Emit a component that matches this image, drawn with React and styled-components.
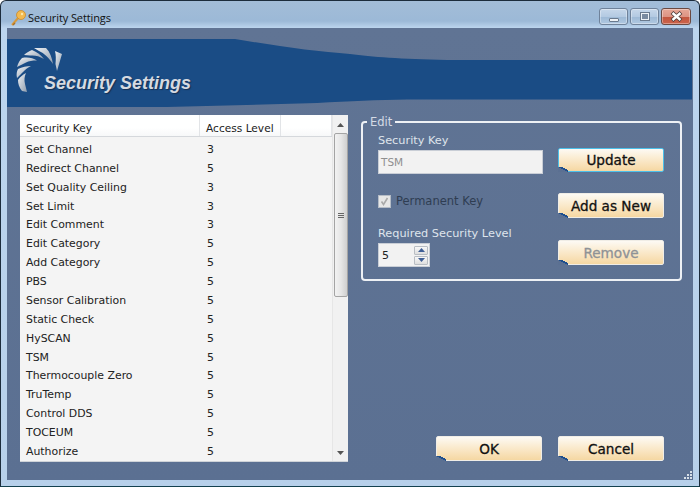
import styled, { createGlobalStyle } from "styled-components";

const GlobalStyle = createGlobalStyle`
  html, body {
    margin: 0;
    padding: 0;
    background: #fff;
  }
`;

const UI_FONT = `"DejaVu Sans", Verdana, sans-serif`;

const SECURITY_KEYS = [
  ["Set Channel", 3],
  ["Redirect Channel", 5],
  ["Set Quality Ceiling", 3],
  ["Set Limit", 3],
  ["Edit Comment", 3],
  ["Edit Category", 5],
  ["Add Category", 5],
  ["PBS", 5],
  ["Sensor Calibration", 5],
  ["Static Check", 5],
  ["HySCAN", 5],
  ["TSM", 5],
  ["Thermocouple Zero", 5],
  ["TruTemp", 5],
  ["Control DDS", 5],
  ["TOCEUM", 5],
  ["Authorize", 5],
];

const Window = styled.div`
  box-sizing: border-box;
  width: 700px;
  height: 487px;
  display: flex;
  flex-direction: column;
  border: 1px solid #1c2c3c;
  border-bottom-color: #14414f;
  border-radius: 6px 6px 0 0;
  background: linear-gradient(180deg, #a3bdd8 0, #9cb9d7 20px, #bcd5ee 27px, #b7d0ea 100%);
  overflow: hidden;
`;

const TitleBar = styled.div`
  height: 27px;
  flex: none;
  display: flex;
  align-items: center;
  padding: 6px 8px 0 10px;
  box-sizing: border-box;
`;

const TitleText = styled.span`
  margin-left: 1px;
  font: 11px "Open Sans", sans-serif;
  letter-spacing: -0.1px;
  color: #111;
`;

const CaptionGroup = styled.div`
  margin-left: auto;
  display: flex;
  gap: 2px;
  margin-top: -2px;
`;

const CaptionButton = styled.div`
  box-sizing: border-box;
  width: ${(p) => p.$w}px;
  height: 17px;
  display: flex;
  align-items: center;
  justify-content: center;
  border: 1px solid ${(p) => (p.$close ? "#6b4a42" : "#6f829a")};
  border-radius: 3px;
  background: ${(p) =>
    p.$close
      ? "linear-gradient(180deg, #e6a797 0, #dd9484 50%, #c2553e 51%, #cb644c 100%)"
      : "linear-gradient(180deg, #c6d7ea 0, #b4cae2 50%, #9db9d6 51%, #b0c8e1 100%)"};
  box-shadow: inset 0 0 0 1px rgba(255, 255, 255, 0.35);
`;

const MinGlyph = styled.div`
  width: 10px;
  height: 4px;
  margin-top: 6px;
  background: #eef2f6;
  border: 1px solid #6a7a8e;
  border-radius: 1px;
  box-sizing: border-box;
`;

const MaxGlyph = styled.div`
  width: 10px;
  height: 9px;
  background: #7a8ba0;
  border: 2px solid #eef2f6;
  outline: 1px solid #6a7a8e;
  outline-offset: -1px;
  box-sizing: border-box;
`;

const Client = styled.div`
  position: relative;
  margin: 0 6px 6px;
  flex: 1;
  display: flex;
  flex-direction: column;
  background: linear-gradient(180deg, #607494 0, #5b7092 100%);
  min-height: 0;
`;

const Header = styled.div`
  position: relative;
  height: 87px;
  flex: none;
`;

const HeaderArt = styled.svg`
  position: absolute;
  left: 0;
  top: 0;
`;

const HeaderTitle = styled.h1`
  position: absolute;
  left: 37px;
  top: 45px;
  margin: 0;
  font: italic bold 18px "Liberation Sans", Arial, sans-serif;
  color: #d5dae1;
  text-shadow: 1px 1px 1px rgba(20, 40, 70, 0.8);
`;

const Body = styled.div`
  flex: 1;
  display: flex;
  gap: 13px;
  padding: 0 12px 19px 13px;
  min-height: 0;
`;

const ListPanel = styled.div`
  width: 328px;
  height: 347px;
  flex: none;
  display: flex;
  background: #f4f4f4;
  border-bottom: 1px solid #cfd3d8;
  box-sizing: border-box;
`;

const Table = styled.div`
  flex: 1;
  display: flex;
  flex-direction: column;
  min-width: 0;
  font: 10.9px ${UI_FONT};
  color: #222;
`;

const HeaderRow = styled.div`
  display: grid;
  grid-template-columns: 180px 81px 1fr;
  height: 22px;
  background: linear-gradient(180deg, #fff 0, #fff 60%, #f7f8f9 100%);
  border-bottom: 1px solid #d5d8dc;
  box-sizing: border-box;
  margin-bottom: 3px;
  font-size: 10.6px;
`;

const HeaderCell = styled.div`
  display: flex;
  align-items: center;
  padding-left: ${(p) => p.$pad}px;
  border-right: 1px solid #e2e4e7;
  padding-top: 5px;
`;

const Row = styled.div`
  display: grid;
  grid-template-columns: 180px 1fr;
  height: 18.875px;
  align-items: center;
`;

const KeyCell = styled.span`
  padding-left: 6px;
`;

const LevelCell = styled.span`
  padding-left: 7px;
`;

const ScrollTrack = styled.div`
  width: 16px;
  flex: none;
  display: flex;
  flex-direction: column;
  align-items: center;
  background: #f1f1f1;
  border-left: 1px solid #e6e6e6;
  box-sizing: border-box;
`;

const ScrollArrow = styled.svg`
  flex: none;
  margin: ${(p) => (p.$down ? "auto 0 6px" : "8px 0 6px")};
`;

const ScrollThumb = styled.div`
  box-sizing: border-box;
  width: 14px;
  height: 164px;
  display: flex;
  flex-direction: column;
  align-items: center;
  justify-content: center;
  gap: 1px;
  border: 1px solid #a4a4a4;
  border-radius: 2px;
  background: linear-gradient(90deg, #f2f2f2 0, #e6e6e6 50%, #cfcfcf 100%);
`;

const GripLine = styled.div`
  width: 6px;
  height: 1px;
  background: #666;
`;

const RightColumn = styled.div`
  flex: 1;
  display: flex;
  flex-direction: column;
  justify-content: space-between;
`;

const Group = styled.fieldset`
  box-sizing: border-box;
  margin: 0;
  height: 166px;
  padding: 5px 16px 0 15px;
  border: 2px solid #eef1f5;
  border-radius: 4px;
  display: grid;
  grid-template-columns: 165px 106px;
  column-gap: 15px;
  min-width: 0;
`;

const Legend = styled.legend`
  margin-left: -11px;
  padding: 0 3px;
  font: 11.5px ${UI_FONT};
  color: #d4dbe5;
`;

const FormColumn = styled.div`
  display: flex;
  flex-direction: column;
  align-items: flex-start;
`;

const FieldLabel = styled.label`
  font: 11.3px/14px ${UI_FONT};
  color: #dfe5ec;
  margin-bottom: 2px;
`;

const KeyInput = styled.div`
  box-sizing: border-box;
  width: 165px;
  height: 24px;
  padding: 0 2px;
  display: flex;
  align-items: center;
  background: #f2f2f2;
  border: 1px solid #c9ced6;
  font: 10.5px ${UI_FONT};
  color: #8f8f8f;
`;

const CheckRow = styled.div`
  display: flex;
  align-items: center;
  gap: 5px;
  margin-top: 20px;
  margin-bottom: 19px;
  font: 11.5px ${UI_FONT};
  color: #2f3d52;
`;

const CheckBox = styled.div`
  box-sizing: border-box;
  width: 13px;
  height: 13px;
  display: flex;
  align-items: center;
  justify-content: center;
  background: #e6e6e6;
  border: 1px solid #b5bcc6;
`;

const Spinner = styled.div`
  box-sizing: border-box;
  width: 52px;
  height: 24px;
  display: flex;
  align-items: center;
  justify-content: space-between;
  padding: 1px 1px 1px 3px;
  background: #f2f2f2;
  border: 1px solid #c9ced6;
  font: 11px ${UI_FONT};
  color: #222;
`;

const SpinColumn = styled.div`
  display: flex;
  flex-direction: column;
  gap: 1px;
`;

const SpinButton = styled.div`
  box-sizing: border-box;
  width: 14px;
  height: 9px;
  display: flex;
  align-items: center;
  justify-content: center;
  border: 1px solid #b8bdc3;
  border-radius: 1px;
  background: linear-gradient(180deg, #f8f8f8, #dedede);
`;

const ButtonColumn = styled.div`
  display: flex;
  flex-direction: column;
  gap: 21px;
  padding-top: 14px;
`;

const ActionButton = styled.button`
  position: relative;
  box-sizing: border-box;
  width: 106px;
  height: ${(p) => (p.$focused ? 24 : 25)}px;
  margin-top: ${(p) => (p.disabled ? 1 : 0)}px;
  padding: 0;
  border: 1px solid ${(p) => (p.$focused ? "#4cc0ea" : "#f0ede6")};
  border-radius: 2px;
  background: linear-gradient(180deg, #fdfaf4 0, #fbeed6 35%, #f8e0b6 75%, #f5d7a2 100%);
  font: 500 13.6px ${UI_FONT};
  color: ${(p) => (p.disabled ? "#8f9296" : "#111")};
  -webkit-text-stroke: 0.3px currentColor;

  &::after {
    content: "";
    position: absolute;
    left: -1px;
    bottom: -1px;
    width: 10px;
    height: 5px;
    background: linear-gradient(to top right, #5b7092 48%, #1f4f8e 48%, #1f4f8e 68%, transparent 68%);
  }
`;

const Footer = styled.div`
  display: flex;
  justify-content: flex-end;
  gap: 16px;
  padding-right: 18px;
`;

const ResizeGrip = styled.svg`
  position: absolute;
  right: 1px;
  bottom: 1px;
`;

const KeyIcon = () => (
  <svg width="16" height="16" viewBox="0 0 16 16">
    <path d="M1 15 L8 7" stroke="#d89a3a" strokeWidth="2" />
    <path d="M2 15 L4 13" stroke="#a8702a" strokeWidth="1.5" />
    <circle cx="10" cy="5" r="4.5" fill="#f3b94e" stroke="#c98a2c" strokeWidth="0.8" />
    <circle cx="11" cy="4" r="1.2" fill="#fbe6a8" />
  </svg>
);

const Blade = ({ d }) => <path d={d} fill="url(#bladeFill)" />;

const HeaderBand = () => (
  <HeaderArt width="685" height="87" viewBox="0 0 685 87">
    <defs>
      <linearGradient id="bladeFill" x1="0" y1="0" x2="1" y2="1">
        <stop offset="0" stopColor="#eef1f4" />
        <stop offset="1" stopColor="#8f9dae" />
      </linearGradient>
    </defs>
    <path
      d="M0 11 L228 11 C270 18 310 24 343 26 C365 29 393 31 440 32 L685 32 L685 71.5 L400 71.5 C370 72 343 73 310 75 L160 79 L0 79 Z"
      fill="#1a4c85"
    />
    <Blade d="M48 23 L55 26 L50 43 L48.5 36 C49 31 49 27 48 23 Z" />
    <Blade d="M27 20 L39 20 C43 24 45 30 46 36 C42 30 37 25 32 23 Z" />
    <Blade d="M17 27 C19 25 22 23 25 22 C30 24 34 27 37 31 C32 28 28 27 23 27.5 Z" />
    <Blade d="M10 39 C11 35 13 32 15 30 C21 29 26 30 30 32.5 C25 32.5 22 33 19 34.5 Z" />
    <Blade d="M10 50 C9 46 10 43 11 41 C15 39 20 38 24 38 C20 40 18 42 15.5 44.5 Z" />
    <Blade d="M15 63 C12 59 11 56 11 52 C13 49 16 46.5 19 45 C17.5 48 17 52 18 56 L20 64 Z" />
  </HeaderArt>
);

const UpArrow = () => (
  <svg width="7" height="4" viewBox="0 0 7 4">
    <path d="M3.5 0 L7 4 L0 4 Z" fill="#3f5f96" />
  </svg>
);

const DownArrow = () => (
  <svg width="7" height="4" viewBox="0 0 7 4">
    <path d="M0 0 L7 0 L3.5 4 Z" fill="#3f5f96" />
  </svg>
);

const App = () => {
  return (
    <>
      <GlobalStyle />
      <Window>
        <TitleBar>
          <KeyIcon />
          <TitleText>Security Settings</TitleText>
          <CaptionGroup>
            <CaptionButton $w={29}>
              <MinGlyph />
            </CaptionButton>
            <CaptionButton $w={29}>
              <MaxGlyph />
            </CaptionButton>
            <CaptionButton $w={30} $close>
              <svg width="13" height="11" viewBox="0 0 13 11">
                <path d="M2 1.5 L11 9.5 M11 1.5 L2 9.5" stroke="#4a3a38" strokeWidth="4" />
                <path d="M2.5 2 L10.5 9 M10.5 2 L2.5 9" stroke="#fff" strokeWidth="2.4" />
              </svg>
            </CaptionButton>
          </CaptionGroup>
        </TitleBar>
        <Client>
          <Header>
            <HeaderBand />
            <HeaderTitle>Security Settings</HeaderTitle>
          </Header>
          <Body>
            <ListPanel>
              <Table>
                <HeaderRow>
                  <HeaderCell $pad={6}>Security Key</HeaderCell>
                  <HeaderCell $pad={6}>Access Level</HeaderCell>
                  <HeaderCell />
                </HeaderRow>
                {SECURITY_KEYS.map(([name, level]) => (
                  <Row key={name}>
                    <KeyCell>{name}</KeyCell>
                    <LevelCell>{level}</LevelCell>
                  </Row>
                ))}
              </Table>
              <ScrollTrack>
                <ScrollArrow $up width="7" height="4" viewBox="0 0 7 4">
                  <path d="M3.5 0 L7 4 L0 4 Z" fill="#555" />
                </ScrollArrow>
                <ScrollThumb>
                  <GripLine />
                  <GripLine />
                  <GripLine />
                </ScrollThumb>
                <ScrollArrow $down width="7" height="4" viewBox="0 0 7 4">
                  <path d="M0 0 L7 0 L3.5 4 Z" fill="#555" />
                </ScrollArrow>
              </ScrollTrack>
            </ListPanel>
            <RightColumn>
              <Group>
                <Legend>Edit</Legend>
                <FormColumn>
                  <FieldLabel>Security Key</FieldLabel>
                  <KeyInput>TSM</KeyInput>
                  <CheckRow>
                    <CheckBox>
                      <svg width="9" height="9" viewBox="0 0 9 9">
                        <path d="M1.5 4.5 L3.5 7.5 L7.5 1" fill="none" stroke="#a9a9a9" strokeWidth="1.6" />
                      </svg>
                    </CheckBox>
                    Permanent Key
                  </CheckRow>
                  <FieldLabel>Required Security Level</FieldLabel>
                  <Spinner>
                    5
                    <SpinColumn>
                      <SpinButton>
                        <UpArrow />
                      </SpinButton>
                      <SpinButton>
                        <DownArrow />
                      </SpinButton>
                    </SpinColumn>
                  </Spinner>
                </FormColumn>
                <ButtonColumn>
                  <ActionButton $focused>Update</ActionButton>
                  <ActionButton>Add as New</ActionButton>
                  <ActionButton disabled>Remove</ActionButton>
                </ButtonColumn>
              </Group>
              <Footer>
                <ActionButton>OK</ActionButton>
                <ActionButton>Cancel</ActionButton>
              </Footer>
            </RightColumn>
          </Body>
          <ResizeGrip width="9" height="9" viewBox="0 0 9 9">
            <path d="M7 1h2v2H7zM4 4h2v2H4zM7 4h2v2H7zM1 7h2v2H1zM4 7h2v2H4zM7 7h2v2H7z" fill="#d7dfe8" />
          </ResizeGrip>
        </Client>
      </Window>
    </>
  );
};

export default App;
